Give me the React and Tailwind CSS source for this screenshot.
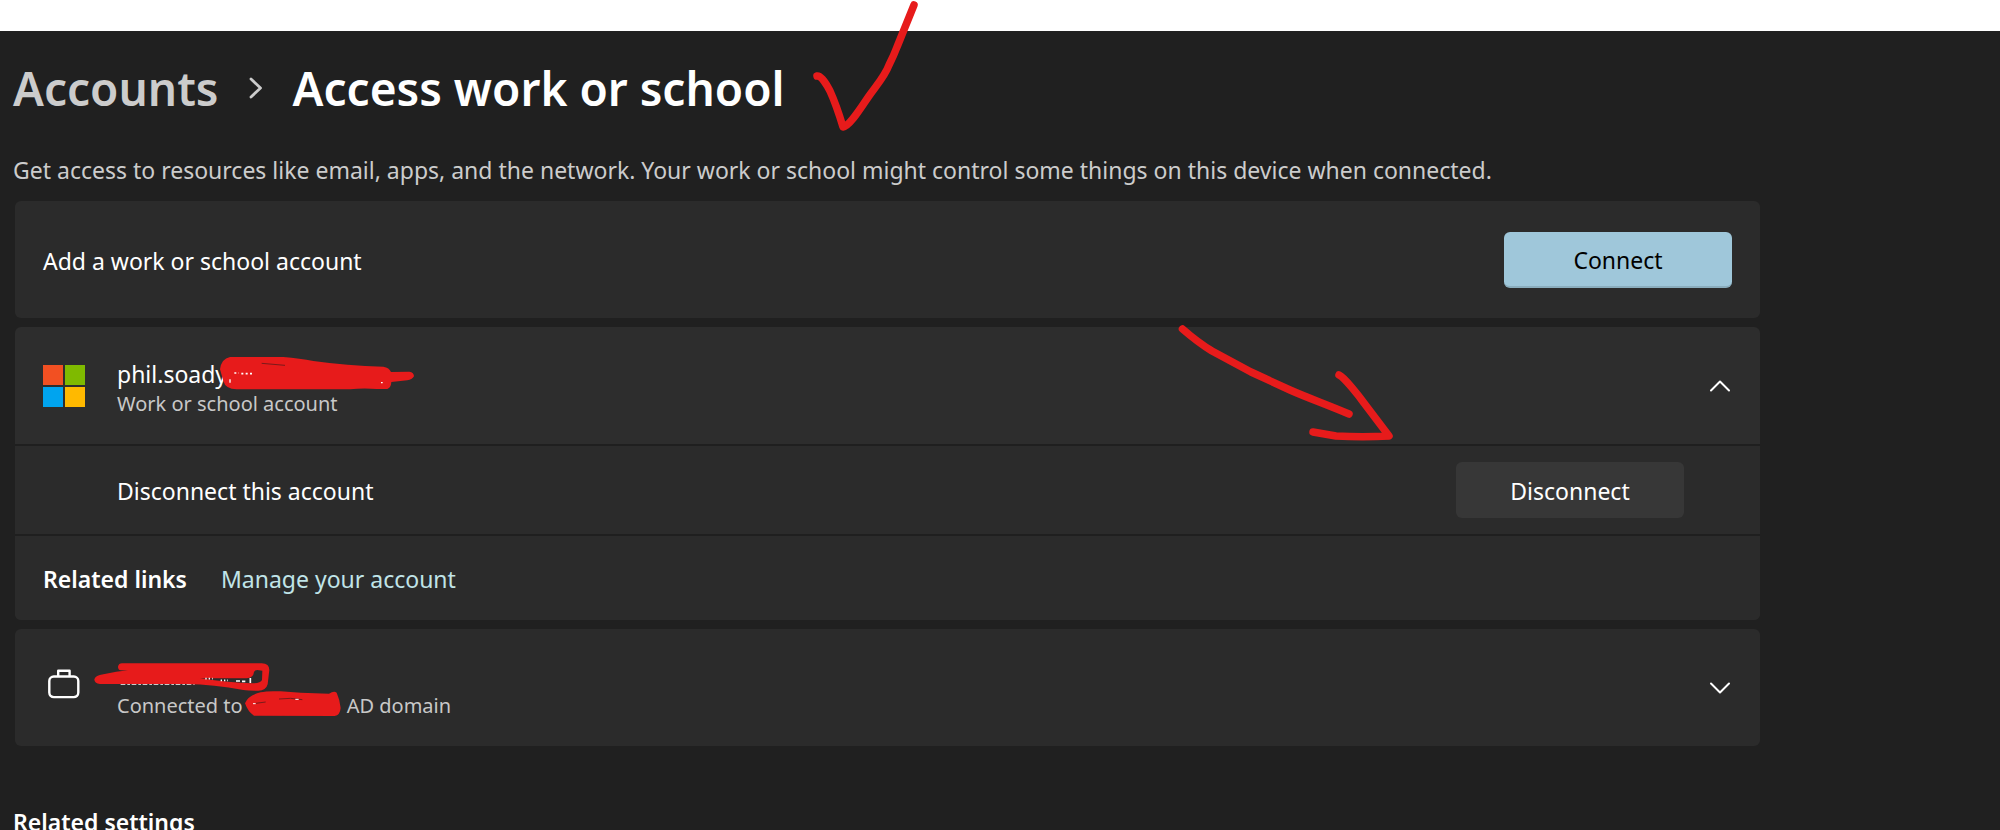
import { useState } from 'react';
import clsx from 'clsx';

function Chevron({ up }) {
  return (
    <svg
      viewBox="0 0 22 14"
      className={clsx('h-[14px] w-[22px]', up && 'rotate-180')}
      fill="none"
      stroke="currentColor"
      strokeWidth="2"
      strokeLinecap="round"
      strokeLinejoin="round"
      aria-hidden="true"
    >
      <path d="M2 2.5 11 11.5 20 2.5" />
    </svg>
  );
}

function MicrosoftLogo() {
  return (
    <svg viewBox="0 0 42 42" className="size-[42px]" aria-hidden="true">
      <path fill="#f25022" d="M0 0h20v20H0z" />
      <path fill="#7fba00" d="M22 0h20v20H22z" />
      <path fill="#00a4ef" d="M0 22h20v20H0z" />
      <path fill="#ffb900" d="M22 22h20v20H22z" />
    </svg>
  );
}

function Briefcase() {
  return (
    <svg
      viewBox="0 0 42 42"
      className="size-[42px]"
      fill="none"
      stroke="currentColor"
      strokeWidth="2.4"
      aria-hidden="true"
    >
      <rect x="6.3" y="9.5" width="29" height="20.6" rx="4.5" />
      <path d="M15.2 9.5V3.7h11.4v5.8" strokeLinejoin="round" />
    </svg>
  );
}

// Pen marks
function CheckMark() {
  return (
    <svg
      viewBox="0 0 110 134"
      className="pointer-events-none absolute -top-14 left-full ml-[25px] h-[134px] w-[110px]"
      fill="none"
      stroke="#e71b1b"
      strokeWidth="7.5"
      strokeLinecap="round"
      strokeLinejoin="round"
      aria-hidden="true"
    >
      <path d="M7 76C11 75 17 85 20 91C25 102 30 117 33 127C40 126 52 106 59 96C66 86 75 76 79 65C82 59 84 55 87 47L104 5" />
    </svg>
  );
}

function Arrow() {
  return (
    <svg
      viewBox="0 0 220 120"
      className="pointer-events-none absolute -top-[3px] right-[364px] h-[120px] w-[220px]"
      fill="none"
      stroke="#e71b1b"
      strokeWidth="7.5"
      strokeLinecap="round"
      strokeLinejoin="round"
      aria-hidden="true"
    >
      <path d="M6.5 5C18 15 26 21 36 27L75 48L114 66C132 74 152 81 173 90" />
      <path d="M163 51C168 53 183 72 188 79L213 112C195 113 178 113 160 112L137 108" />
    </svg>
  );
}

function NameScribble() {
  return (
    <svg
      viewBox="651 489 600 111"
      className="pointer-events-none absolute -top-1 left-[100px] h-[37px] w-[200px]"
      aria-hidden="true"
    >
      <path
        fill="#e71b1b"
        d="M660 535Q664 503 690 498L850 498Q900 502 940 510Q1040 524 1150 527Q1168 530 1173 543L1228 542Q1242 544 1242 556Q1236 566 1222 568L1174 573Q1173 590 1162 594L1130 594Q1090 590 1050 595L710 595Q676 594 670 570Z"
      />
      <path stroke="#7a1a1a" strokeWidth="3" fill="none" d="M785 517 855 523" />
      <path stroke="#fff" strokeWidth="5" strokeDasharray="6 7" d="M703 546h14M724 548h34" />
      <path stroke="#fff" strokeWidth="4" d="M690 565v10M1143 575h5" />
    </svg>
  );
}

function DomainScribble() {
  return (
    <svg
      viewBox="279 126 534 90"
      className="pointer-events-none absolute top-0.5 -left-6 h-[30px] w-[178px]"
      aria-hidden="true"
    >
      <path
        stroke="#fff"
        strokeWidth="4"
        strokeDasharray="14 6 8 5"
        d="M362 192h222"
      />
      <path
        fill="#e71b1b"
        fillRule="evenodd"
        d="M354 140Q356 129 368 130L785 130Q808 131 808 150L803 193Q798 212 775 212Q745 212 730 210Q640 194 560 192L300 192Q283 190 283 178Q286 166 310 163Q350 153 384 152L362 151Q354 149 354 140ZM762 156Q764 150 772 150L787 152L786 180Q782 190 756 190Q690 188 600 175Q680 174 740 175Q760 174 762 156Z"
      />
      <path stroke="#fff" strokeWidth="5" strokeDasharray="4 6" d="M616 176h22M662 181h22" />
      <path stroke="#fff" strokeWidth="5" d="M708 183h12M726 184h10M751 174v15" />
    </svg>
  );
}

function InlineScribble() {
  return (
    <svg viewBox="733 210 288 81" className="mb-1 ml-0.5 h-[27px] w-24 shrink-0" aria-hidden="true">
      <path
        fill="#e71b1b"
        d="M733 250Q742 226 780 217Q800 212 840 214L900 218L985 221Q1000 212 1008 218Q1018 240 1020 264Q1018 286 1002 288L760 287Q742 276 733 250Z"
      />
      <path stroke="#7a1a1a" strokeWidth="3" fill="none" d="M835 237Q870 232 905 239M765 250l30 -4" />
      <path stroke="#fff" strokeWidth="3" d="M757 251h8M884 238h10" />
    </svg>
  );
}

function AccountHeader({ icon, open, onToggle, label, children }) {
  return (
    <div className="flex min-h-[117px] items-center gap-8 px-7">
      {icon}
      <div className="flex-1 pt-1">{children}</div>
      <button
        type="button"
        aria-label={label}
        aria-expanded={open}
        onClick={onToggle}
        className="-mr-[10px] flex size-[44px] items-center justify-center rounded-md"
      >
        <Chevron up={open} />
      </button>
    </div>
  );
}

export default function App() {
  const [open, setOpen] = useState(true);
  const [domainOpen, setDomainOpen] = useState(false);

  return (
    <div className="h-screen overflow-hidden bg-white pt-[31px] font-['Noto_Sans','Open_Sans',sans-serif] text-[23px] text-white">
      <main className="min-h-full bg-[#202020] pr-4 pl-[13px]">
        <nav className="flex items-center pt-[25px] text-[46px] leading-[64px] font-semibold">
          <a href="#accounts" className="text-[#cccccc]">
            Accounts
          </a>
          <svg
            viewBox="0 0 14 22"
            className="mx-[30px] h-[22px] w-[14px]"
            fill="none"
            stroke="#cccccc"
            strokeWidth="2.8"
            strokeLinecap="round"
            strokeLinejoin="round"
            aria-hidden="true"
          >
            <path d="M2 2 11.5 11 2 20" />
          </svg>
          <h1 className="relative">
            Access work or school
            <CheckMark />
          </h1>
        </nav>

        <p className="pt-[34px] leading-8 text-[#cccccc]">
          Get access to resources like email, apps, and the network. Your work or school might control some things on
          this device when connected.
        </p>

        <div className="mt-[15px] ml-[2px] flex max-w-[1745px] flex-col gap-[9px]">
          <section className="flex min-h-[117px] items-center justify-between rounded-md bg-[#2b2b2b] px-7">
            <span className="pt-1">Add a work or school account</span>
            <button
              type="button"
              className="h-14 w-[228px] rounded-md border-b-2 border-[#8aadbd] bg-[#9fc7da] pt-1 text-black"
            >
              Connect
            </button>
          </section>

          <section className="relative rounded-md bg-[#2d2d2d]">
            <AccountHeader
              icon={<MicrosoftLogo />}
              open={open}
              onToggle={() => setOpen(!open)}
              label="Work or school account details"
            >
              <div className="relative leading-8">
                phil.soady
                <NameScribble />
              </div>
              <div className="text-xl leading-7 text-[#c8c8c8]">Work or school account</div>
            </AccountHeader>
            {open && (
              <>
                <div className="flex min-h-[90px] items-center justify-between border-t-2 border-[#1f1f1f] bg-[#2b2b2b] pr-[76px] pl-[102px]">
                  <span className="pt-0.5">Disconnect this account</span>
                  <button type="button" className="h-14 w-[228px] rounded-md bg-[#373737] pt-0.5">
                    Disconnect
                  </button>
                </div>
                <div className="flex min-h-[86px] items-center gap-[34px] rounded-b-md border-t-2 border-[#1f1f1f] bg-[#2b2b2b] px-7 pt-0.5">
                  <span className="font-semibold">Related links</span>
                  <a href="#manage" className="text-[#c0e4e8]">
                    Manage your account
                  </a>
                </div>
              </>
            )}
            <Arrow />
          </section>

          <section className="rounded-md bg-[#2b2b2b]">
            <AccountHeader
              icon={<Briefcase />}
              open={domainOpen}
              onToggle={() => setDomainOpen(!domainOpen)}
              label="AD domain details"
            >
              <div className="relative h-8">
                <DomainScribble />
              </div>
              <div className="flex h-7 items-center text-xl leading-7 text-[#c8c8c8]">
                Connected to
                <InlineScribble />
                <span className="ml-1.5">AD domain</span>
              </div>
            </AccountHeader>
          </section>
        </div>

        <h2 className="pt-[60px] leading-8 font-semibold">Related settings</h2>
      </main>
    </div>
  );
}
